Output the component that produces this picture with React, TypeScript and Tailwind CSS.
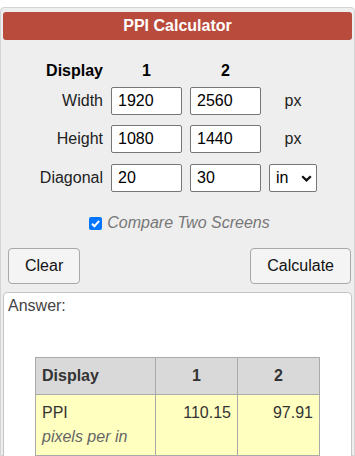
import { useState } from "react";

const font = { fontFamily: '"Liberation Sans", Arial, sans-serif' };

const Field = ({ value }: { value: string }) => (
  <input
    defaultValue={value}
    className="ml-[8px] w-[71px] h-[28px] px-[6px] border border-[#767676] rounded-[2px] bg-white text-[16px] text-black outline-none"
  />
);

const App = () => {
  const [compare, setCompare] = useState(true);

  return (
    <div className="w-[355px] h-[456px] overflow-hidden bg-white pt-[7px] text-[16px]" style={font}>
      <div className="h-[449px] border border-[#d4d4d4] rounded-t-[4px] bg-[#eeeeee] pt-[4px] flex flex-col">
        {/* Title */}
        <div className="mx-[2px] h-[28px] shrink-0 rounded-[3px] bg-[#b94b3c] text-white font-bold flex items-center justify-center">
          PPI Calculator
        </div>

        {/* Form */}
        <div className="mt-[21px] h-[19px] shrink-0 leading-[19px] flex font-bold text-black">
          <div className="w-[102px] text-right">Display</div>
          <div className="ml-[8px] w-[71px] text-center">1</div>
          <div className="ml-[8px] w-[71px] text-center">2</div>
        </div>

        <div className="mt-[7px] h-[28px] shrink-0 flex items-center text-[#222]">
          <div className="w-[102px] text-right">Width</div>
          <Field value="1920" />
          <Field value="2560" />
          <div className="ml-[8px] w-[48px] text-center">px</div>
        </div>

        <div className="mt-[10px] h-[28px] shrink-0 flex items-center text-[#222]">
          <div className="w-[102px] text-right">Height</div>
          <Field value="1080" />
          <Field value="1440" />
          <div className="ml-[8px] w-[48px] text-center">px</div>
        </div>

        <div className="mt-[11px] h-[28px] shrink-0 flex items-center text-[#222]">
          <div className="w-[102px] text-right">Diagonal</div>
          <Field value="20" />
          <Field value="30" />
          <div className="ml-[8px] w-[48px] h-[28px] pl-[6px] pr-[4px] border border-[#767676] rounded-[2px] bg-white flex items-center justify-between text-black">
            <span>in</span>
            <svg width="11" height="7" viewBox="0 0 11 7">
              <path d="M1.2 1.2 L5.5 5.4 L9.8 1.2" fill="none" stroke="#111" strokeWidth="2.3" />
            </svg>
          </div>
        </div>

        <label className="mt-[22px] h-[18px] shrink-0 flex items-center justify-center cursor-pointer">
          <span
            onClick={() => setCompare(!compare)}
            className={`ml-[4px] w-[13px] h-[13px] rounded-[2px] flex items-center justify-center ${compare ? "bg-[#0075ff]" : "bg-white border border-[#767676]"}`}
          >
            {compare && (
              <svg width="11" height="11" viewBox="0 0 11 11">
                <path d="M2 5.8 L4.4 8.2 L9.2 2.8" fill="none" stroke="white" strokeWidth="2" />
              </svg>
            )}
          </span>
          <span className="ml-[5px] italic text-[#777]">Compare Two Screens</span>
        </label>

        {/* Buttons */}
        <div className="mt-[16px] h-[36px] shrink-0 pl-[7px] pr-[3px] flex justify-between">
          <button className="h-[36px] px-[16px] border border-[#a8a8a8] rounded-[4px] bg-[#f4f4f4] text-[#111]">
            Clear
          </button>
          <button className="h-[36px] px-[16px] border border-[#a8a8a8] rounded-[4px] bg-[#f4f4f4] text-[#111]">
            Calculate
          </button>
        </div>

        {/* Answer */}
        <div className="mx-[2px] mt-[8px] flex-1 border border-[#c4c4c4] rounded-t-[4px] bg-white px-[4px] pt-[4px]">
          <div className="h-[18px] leading-[18px] text-[#444]">Answer:</div>
          <table className="mx-auto mt-[42px] w-[285px] border-collapse text-[#333]">
            <thead>
              <tr className="bg-[#d9d9d9]">
                <th className="w-[120px] border border-[#aaaaaa] px-[6px] py-[6px] leading-[24px] text-left font-bold">
                  Display
                </th>
                <th className="w-[82px] border border-[#aaaaaa] px-[6px] py-[6px] leading-[24px] text-center font-bold">1</th>
                <th className="border border-[#aaaaaa] px-[6px] py-[6px] leading-[24px] text-center font-bold">2</th>
              </tr>
            </thead>
            <tbody>
              <tr className="bg-[#ffffc0] align-top">
                <td className="border border-[#aaaaaa] px-[6px] py-[6px] leading-[24px]">
                  PPI
                  <br />
                  <span className="italic text-[#666]">pixels per in</span>
                </td>
                <td className="border border-[#aaaaaa] px-[6px] py-[6px] leading-[24px] text-right">110.15</td>
                <td className="border border-[#aaaaaa] px-[6px] py-[6px] leading-[24px] text-right">97.91</td>
              </tr>
            </tbody>
          </table>
        </div>
      </div>
    </div>
  );
};

export default App;
